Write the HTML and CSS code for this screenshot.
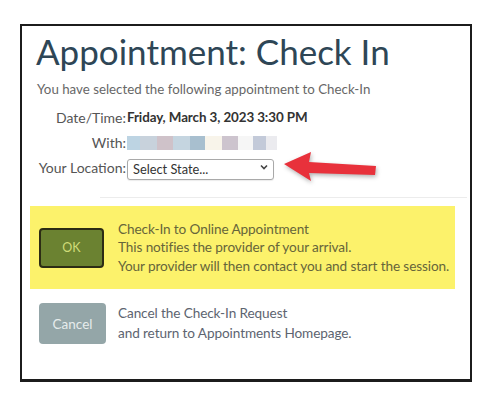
FILE: index.html
```html
<!DOCTYPE html>
<html>
<head>
<meta charset="utf-8">
<link rel="stylesheet" href="styles.css">
</head>
<body>
<div class="frame">
  <h1 class="title">Appointment: Check In</h1>
  <p class="intro">You have selected the following appointment to Check-In</p>
  <div class="details">
    <span class="label">Date/Time:</span>
    <span class="value">Friday, March 3, 2023 3:30 PM</span>
    <span class="label">With:</span>
    <span class="value redacted">
      <i class="b b1"></i><i class="b b2"></i><i class="b b3"></i><i class="b b4"></i><i class="b b5"></i><i class="b b6"></i><i class="b b7"></i><i class="b b8"></i><i class="b b9"></i><i class="b b10"></i>
    </span>
    <span class="label">Your Location:</span>
    <span class="value">
      <span class="select-wrap">
        <select class="select"><option>Select State...</option></select>
        <svg class="chev" width="8" height="6" viewBox="0 0 8 6"><path d="M1 1.5 L4 4.5 L7 1.5" fill="none" stroke="#444" stroke-width="1.6"/></svg>
      </span>
    </span>
  </div>
  <svg class="arrow" width="100" height="40" viewBox="0 0 100 40">
    <polygon points="4,16 31,4 29,14 96,18 95,27 29,25 31,33" fill="#e8313b"/>
  </svg>
  <div class="sep"></div>
  <div class="option ok-row">
    <button class="btn btn-ok">OK</button>
    <div class="desc">Check-In to Online Appointment<br>This notifies the provider of your arrival.<br>Your provider will then contact you and start the session.</div>
  </div>
  <div class="option cancel-row">
    <button class="btn btn-cancel">Cancel</button>
    <div class="desc">Cancel the Check-In Request<br>and return to Appointments Homepage.</div>
  </div>
</div>
</body>
</html>
```
FILE: styles.css
```css
html, body {
  margin: 0;
  padding: 0;
  background: #fff;
}
body {
  font-family: Lato, "Open Sans", sans-serif;
}
.frame {
  position: relative;
  margin: 24px 0 0 20px;
  width: 448px;
  height: 353px;
  border: 2px solid #1c1c1c;
  border-bottom-width: 3px;
  background: #fff;
}
.title {
  margin: 5px 0 0 14px;
  font-size: 35px;
  line-height: 40px;
  font-weight: 400;
  color: #2e4656;
}
.intro {
  margin: 10px 0 0 15px;
  font-size: 13.3px;
  line-height: 16px;
  color: #676767;
}
.details {
  margin: 8px 0 0 15px;
  display: grid;
  grid-template-columns: 89px auto;
  grid-auto-rows: 25px;
  column-gap: 1px;
  align-items: center;
  font-size: 14px;
  line-height: 25px;
}
.label {
  text-align: right;
  color: #555;
}
.value {
  color: #333;
  font-weight: 700;
  font-size: 13.4px;
  letter-spacing: -0.1px;
  display: flex;
  align-items: center;
}
.redacted {
  height: 14px;
}
.b {
  display: block;
  height: 14px;
}
.b1 { width: 13px; background: #bdd4e3; }
.b2 { width: 17px; background: #c8d2dc; }
.b3 { width: 16px; background: #cfc2c9; }
.b4 { width: 17px; background: #c5d5e0; }
.b5 { width: 15px; background: #a8bfcf; }
.b6 { width: 17px; background: #f8f4ea; }
.b7 { width: 16px; background: #cdc4ce; }
.b8 { width: 15px; background: #f6f6f6; }
.b9 { width: 13px; background: #c3cad9; }
.b10 { width: 11px; background: #ebebef; }
.select-wrap {
  position: relative;
  display: block;
  width: 147px;
  height: 21px;
}
.select {
  appearance: none;
  -webkit-appearance: none;
  width: 147px;
  height: 21px;
  margin: 0;
  padding: 0 0 0 5px;
  border: 1px solid #a9a9a9;
  border-radius: 3px;
  background: #fff;
  font-family: Lato, sans-serif;
  font-size: 12.8px;
  color: #333;
  box-shadow: 0 1px 1px rgba(0,0,0,0.08);
}
.chev {
  position: absolute;
  right: 6px;
  top: 7px;
}
.arrow {
  position: absolute;
  left: 258px;
  top: 122px;
  filter: drop-shadow(1px 2px 2px rgba(0,0,0,0.3));
}
.sep {
  margin: 17px 3px 0 78px;
  height: 1px;
  background: #ececec;
}
.option {
  display: flex;
  align-items: center;
}
.ok-row {
  margin: 8px 0 0 8px;
  width: 425px;
  height: 83px;
  background: #fcf26b;
}
.btn {
  flex: none;
  margin: 0 14px 0 9px;
  font-family: Lato, sans-serif;
  font-size: 12.5px;
  border-radius: 4px;
  padding: 0;
}
.btn-ok {
  width: 65px;
  height: 40px;
  background: #6b8231;
  border: 2px solid #2c2c14;
  color: #cfdc78;
}
.btn-cancel {
  margin-left: 17px;
  width: 67px;
  height: 41px;
  background: #94a6a8;
  border: none;
  color: #e6ecec;
  font-size: 13.5px;
  margin-right: 12px;
}
.desc {
  font-size: 13.6px;
  line-height: 18.5px;
  color: #66653a;
  letter-spacing: -0.1px;
}
.cancel-row {
  margin-top: 14px;
  align-items: flex-start;
}
.cancel-row .desc {
  line-height: 20px;
  color: #5d6470;
}
```
